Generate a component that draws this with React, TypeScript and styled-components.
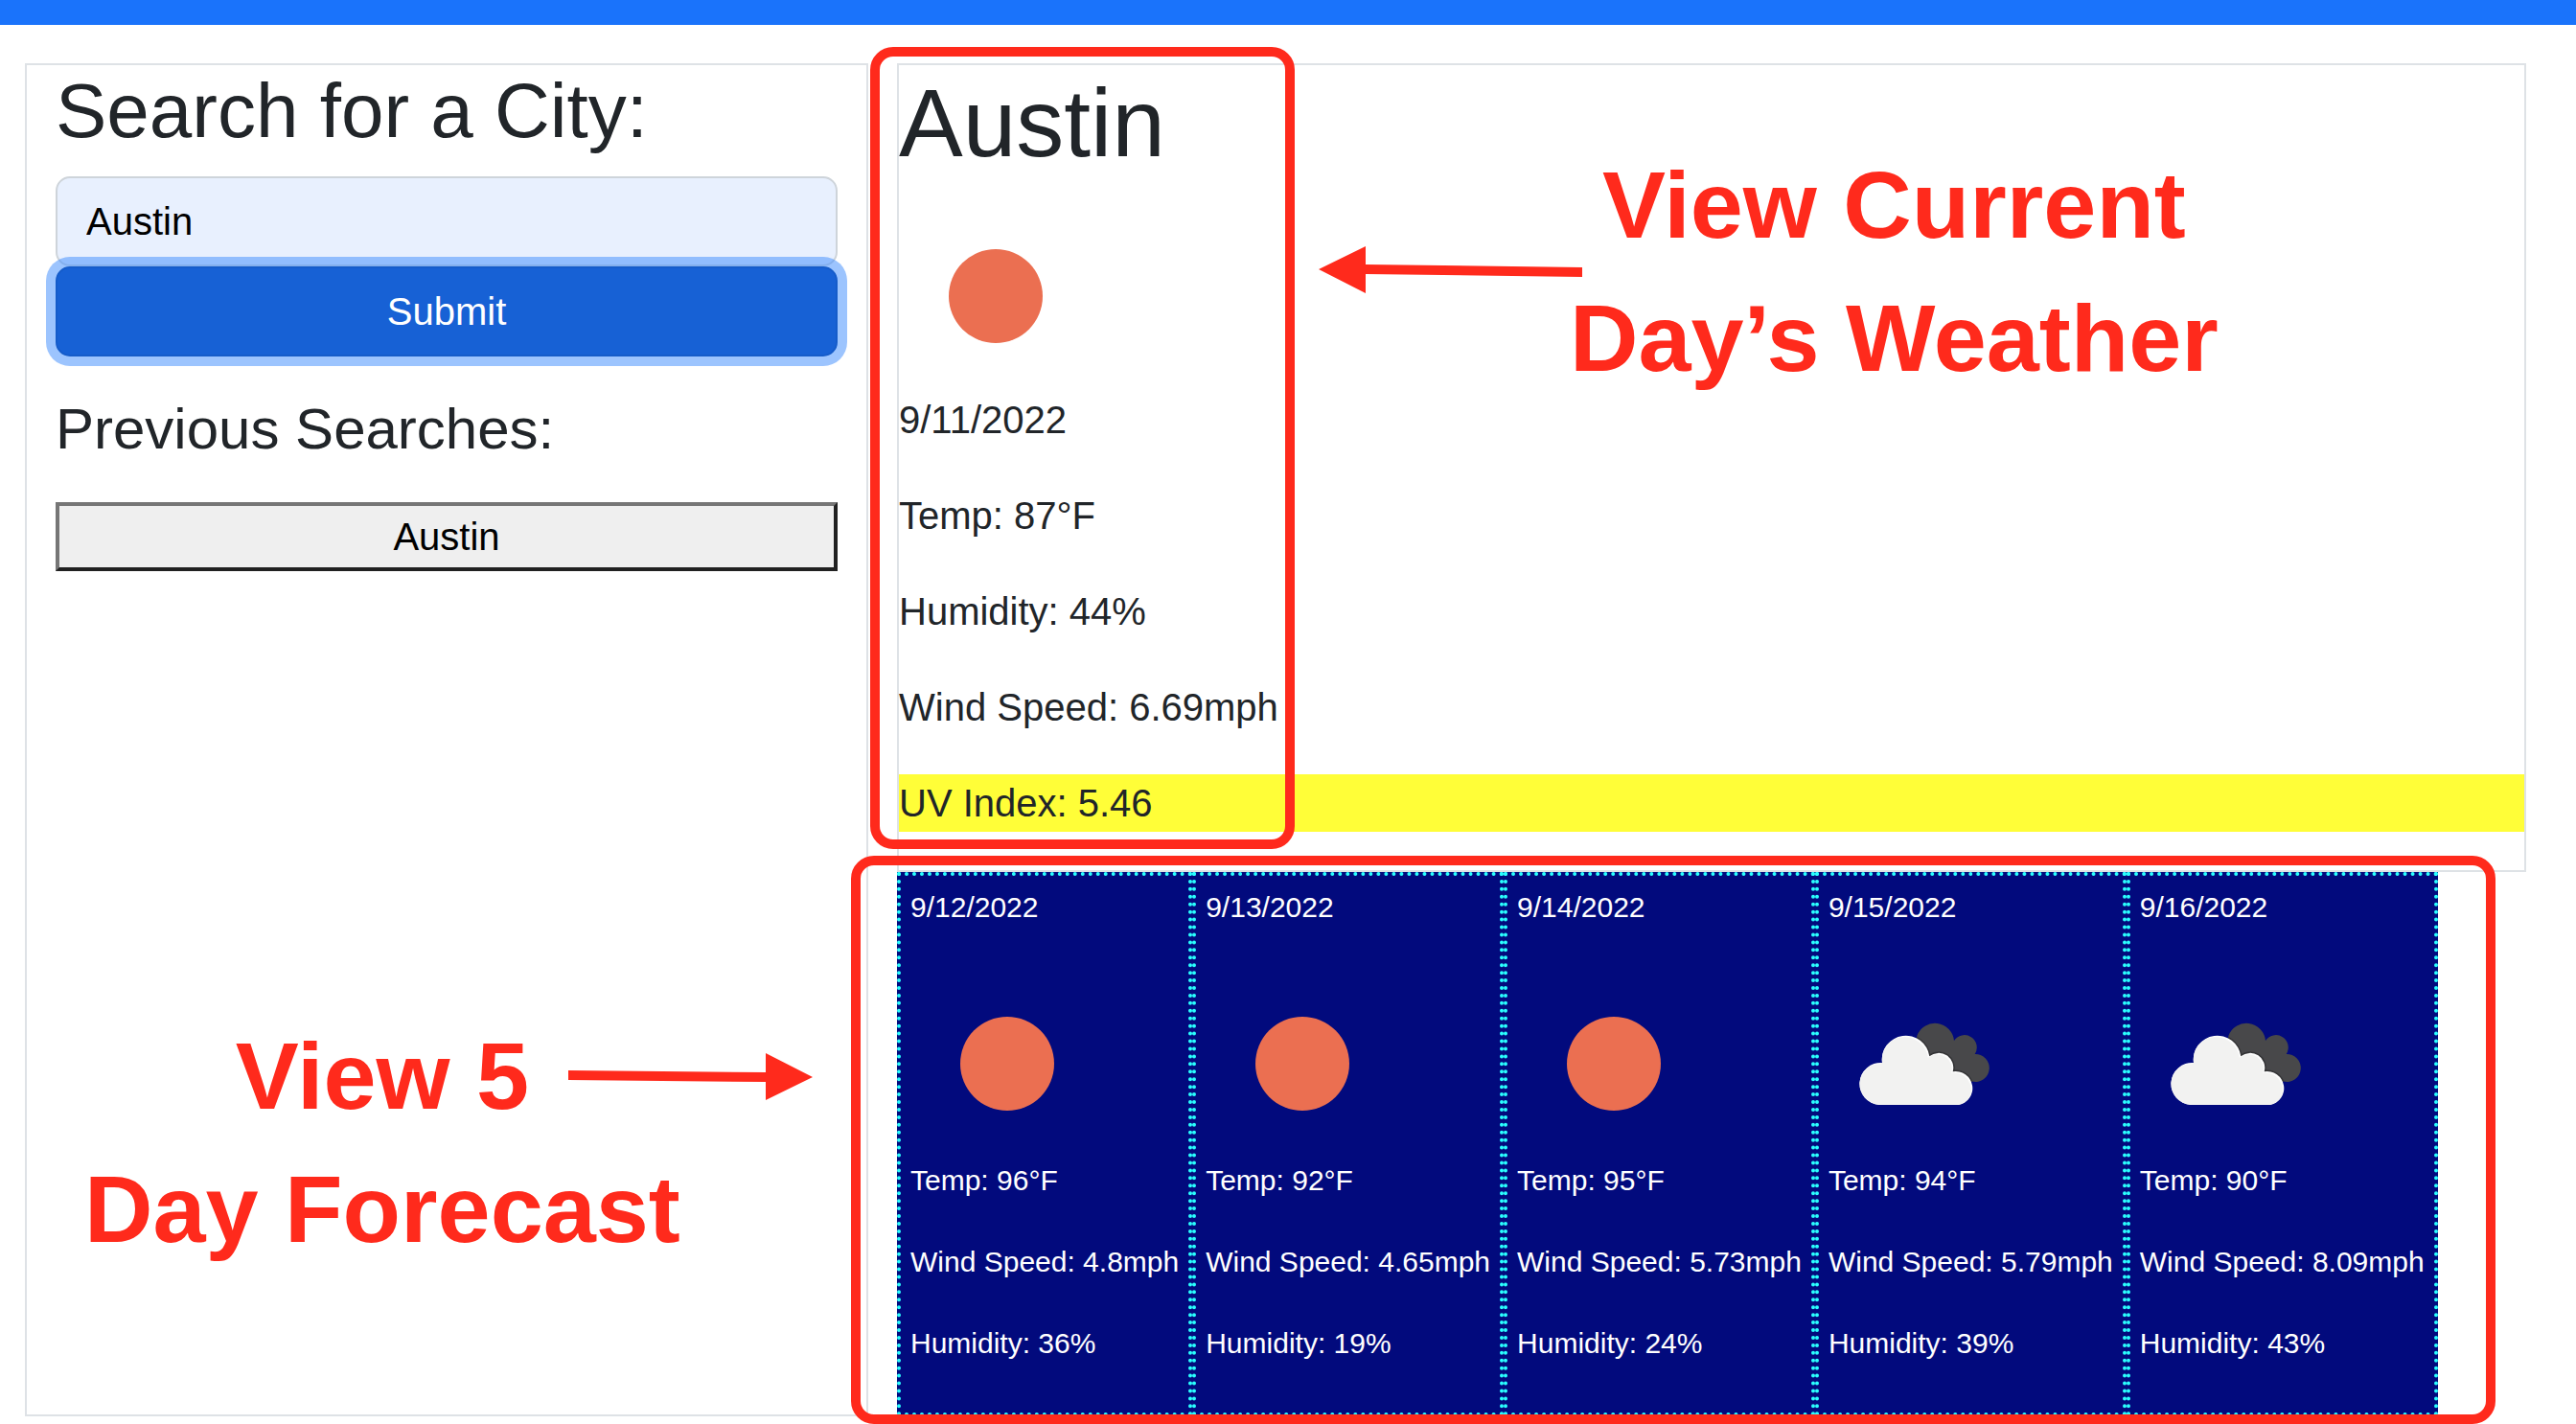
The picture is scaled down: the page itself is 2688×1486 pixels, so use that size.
import React, { useState } from "react";
import styled, { createGlobalStyle } from "styled-components";

const GlobalStyle = createGlobalStyle`
  *, *::before, *::after { box-sizing: border-box; }
  body {
    margin: 0;
    background: #fff;
    color: #212529;
    font-family: "Liberation Sans", Helvetica, Arial, sans-serif;
    font-size: 40px;
    line-height: 60px;
  }
`;

const RED = "#ff2a1c";

const TopBar = styled.header`
  height: 26px;
  background: #1a73fb;
`;

const Page = styled.main`
  display: grid;
  grid-template-columns: 880fr 1700fr;
  column-gap: 30px;
  padding: 40px 52px 8px 26px;
`;

const SearchColumn = styled.aside`
  position: relative;
  border: 2px solid #dee2e6;
  padding: 0 30px;
`;

const SearchForm = styled.form`
  display: flex;
  flex-direction: column;
  margin: 0 0 40px;
`;

const SearchLabel = styled.label`
  font-size: 80px;
  line-height: 96px;
  margin-bottom: 20px;
`;

const CityInput = styled.input`
  width: 100%;
  height: 94px;
  padding: 15px 30px;
  border: 2px solid #ced4da;
  border-radius: 15px;
  background: #e8f0fe;
  color: #000;
  font: inherit;
  outline: none;
`;

const SubmitButton = styled.button`
  position: relative;
  height: 94px;
  padding: 15px 30px;
  border: 2px solid #155cca;
  border-radius: 15px;
  background: #1761d5;
  color: #fff;
  font: inherit;
  box-shadow: 0 0 0 10px rgba(58, 137, 253, 0.5);
`;

const HistoryTitle = styled.h2`
  margin: 0 0 40px;
  font-size: 60px;
  font-weight: 400;
  line-height: 72px;
`;

const HistoryButton = styled.button`
  display: block;
  width: 100%;
  padding: 2px 15px;
  border: 4px solid;
  border-color: #767676 #212121 #212121 #767676;
  background: #efefef;
  color: #000;
  font: inherit;
`;

const WeatherColumn = styled.div`
  display: flex;
  flex-direction: column;
  align-items: flex-start;
`;

const CurrentPanel = styled.section`
  position: relative;
  align-self: stretch;
  border: 2px solid #dee2e6;
`;

const CityName = styled.h1`
  margin: 0 0 20px;
  font-size: 100px;
  font-weight: 400;
  line-height: 120px;
`;

const WeatherIcon = styled.svg`
  display: block;
  width: 200px;
  height: 200px;
`;

const Detail = styled.p<{ $highlight?: boolean }>`
  margin: 0 0 40px;
  background: ${(p) => (p.$highlight ? "#fffe38" : "transparent")};
`;

const Forecast = styled.section`
  position: relative;
  display: flex;
`;

const DayCard = styled.article`
  padding: 10px;
  border: 4px dotted #2bfffe;
  background: #020a7d;
  color: #fff;
  font-size: 30px;
  line-height: 45px;
  white-space: nowrap;
`;

const DayDetail = styled.p`
  margin: 0 0 40px;
`;

const Frame = styled.div`
  position: absolute;
  border: 10px solid ${RED};
  border-radius: 24px;
  pointer-events: none;
`;

const CurrentFrame = styled(Frame)`
  top: -19px;
  left: -30px;
  bottom: 22px;
  width: 443px;
`;

const ForecastFrame = styled(Frame)`
  top: -17px;
  left: -48px;
  right: -60px;
  bottom: -8px;
`;

const Callout = styled.p`
  position: absolute;
  margin: 0;
  color: ${RED};
  font-family: "Liberation Sans Narrow", "Arial Narrow", "Liberation Sans", sans-serif;
  font-size: 99px;
  font-weight: 700;
  line-height: 139px;
  text-align: center;
  white-space: nowrap;
`;

const CurrentCallout = styled(Callout)`
  top: 76px;
  left: 700px;
`;

const ForecastCallout = styled(Callout)`
  top: 985px;
  left: 60px;
`;

const Arrow = styled.svg`
  position: absolute;
  height: 50px;
  fill: ${RED};
`;

const CurrentArrow = styled(Arrow)`
  top: 188px;
  left: 438px;
  width: 276px;
`;

const ForecastArrow = styled(Arrow)`
  top: 1031px;
  left: 565px;
  width: 256px;
`;

type Sky = "clear" | "clouds";

const CLOUD =
  "M54 144A22 22 0 1 1 57 100A24.7 24.7 0 1 1 106.3 93.3A15.3 15.3 0 0 1 130.7 109.3A17.6 17.6 0 0 1 136.7 144Z";
const DARK_CLOUD =
  "M93.3 72A20 20 0 0 1 132 77A12 12 0 0 1 153.7 91A14.5 14.5 0 1 1 151 119.6L120 124L93 92Z";

function SkyIcon({ sky, id }: { sky: Sky; id: string }) {
  if (sky === "clear") {
    return (
      <WeatherIcon viewBox="0 0 200 200" role="img" aria-label="Clear sky">
        <circle cx="101" cy="101" r="49" fill="#eb6f51" />
      </WeatherIcon>
    );
  }
  return (
    <WeatherIcon viewBox="0 0 200 200" role="img" aria-label="Broken clouds">
      <clipPath id={`${id}-dark`}>
        <path d={DARK_CLOUD} />
      </clipPath>
      <clipPath id={`${id}-light`}>
        <path d={CLOUD} />
      </clipPath>
      <g transform="translate(-1 0)">
        <path d={DARK_CLOUD} fill="#48484a" />
        <g clipPath={`url(#${id}-dark)`}>
          <path d={CLOUD} fill="#343436" stroke="#343436" strokeWidth="3" />
        </g>
        <path d={CLOUD} fill="#fdfdfd" />
        <g clipPath={`url(#${id}-light)`}>
          <path d={CLOUD} fill="#f2f2f1" transform="translate(-1.5 1.5)" />
        </g>
      </g>
    </WeatherIcon>
  );
}

interface Day {
  date: string;
  sky: Sky;
  temp: number;
  wind: number;
  humidity: number;
}

const days: Day[] = [
  { date: "9/12/2022", sky: "clear", temp: 96, wind: 4.8, humidity: 36 },
  { date: "9/13/2022", sky: "clear", temp: 92, wind: 4.65, humidity: 19 },
  { date: "9/14/2022", sky: "clear", temp: 95, wind: 5.73, humidity: 24 },
  { date: "9/15/2022", sky: "clouds", temp: 94, wind: 5.79, humidity: 39 },
  { date: "9/16/2022", sky: "clouds", temp: 90, wind: 8.09, humidity: 43 },
];

export default function App() {
  const [city, setCity] = useState("Austin");

  return (
    <>
      <GlobalStyle />
      <TopBar />
      <Page>
        <SearchColumn>
          <SearchForm onSubmit={(e) => e.preventDefault()}>
            <SearchLabel htmlFor="city">Search for a City:</SearchLabel>
            <CityInput
              id="city"
              type="text"
              value={city}
              onChange={(e) => setCity(e.target.value)}
            />
            <SubmitButton type="submit">Submit</SubmitButton>
          </SearchForm>
          <HistoryTitle>Previous Searches:</HistoryTitle>
          <HistoryButton type="button" onClick={() => setCity("Austin")}>
            Austin
          </HistoryButton>
          <ForecastCallout>
            View 5<br />
            Day Forecast
          </ForecastCallout>
          <ForecastArrow viewBox="0 0 256 50" aria-hidden="true">
            <path d="M0 18L206 20V0L255 25L206 49V30L0 28Z" />
          </ForecastArrow>
        </SearchColumn>

        <WeatherColumn>
          <CurrentPanel>
            <CityName>Austin</CityName>
            <SkyIcon sky="clear" id="today" />
            <Detail>9/11/2022</Detail>
            <Detail>Temp: 87°F</Detail>
            <Detail>Humidity: 44%</Detail>
            <Detail>Wind Speed: 6.69mph</Detail>
            <Detail $highlight>UV Index: 5.46</Detail>
            <CurrentFrame />
            <CurrentArrow viewBox="0 0 276 50" aria-hidden="true">
              <path d="M0 25L49 1V20L275 23V33L49 30V50Z" />
            </CurrentArrow>
            <CurrentCallout>
              View Current
              <br />
              Day’s Weather
            </CurrentCallout>
          </CurrentPanel>

          <Forecast>
            {days.map((day) => (
              <DayCard key={day.date}>
                <DayDetail>{day.date}</DayDetail>
                <SkyIcon sky={day.sky} id={`day-${day.date.split("/")[1]}`} />
                <DayDetail>Temp: {day.temp}°F</DayDetail>
                <DayDetail>Wind Speed: {day.wind}mph</DayDetail>
                <DayDetail>Humidity: {day.humidity}%</DayDetail>
              </DayCard>
            ))}
            <ForecastFrame />
          </Forecast>
        </WeatherColumn>
      </Page>
    </>
  );
}
